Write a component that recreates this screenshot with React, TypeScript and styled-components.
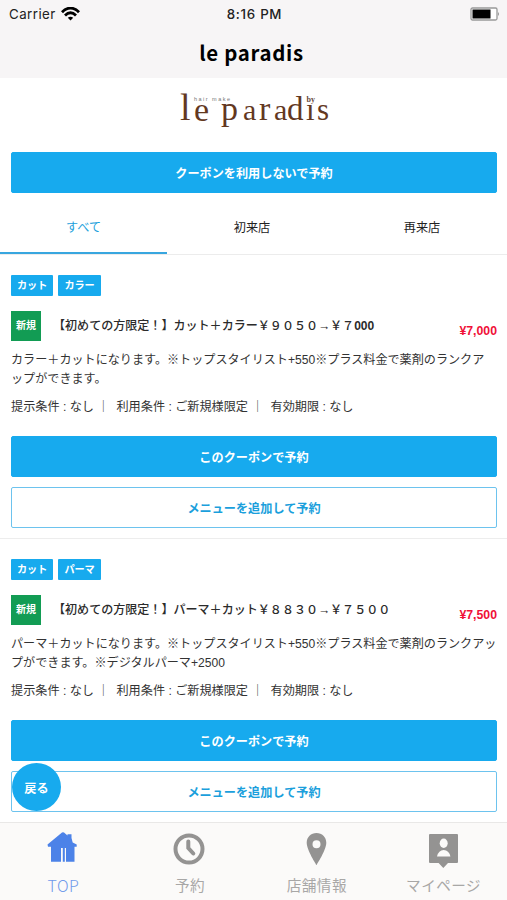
import React from 'react';
import styled, { createGlobalStyle } from 'styled-components';

const BLUE = '#17aaee';

const GlobalStyle = createGlobalStyle`
  * { box-sizing: border-box; }
  body {
    margin: 0;
    background: #fff;
    color: #333;
    font-family: "Liberation Sans", "Noto Sans CJK JP", sans-serif;
    font-size: 12.15px;
  }
  button { font: inherit; margin: 0; padding: 0; cursor: pointer; }
`;

const Screen = styled.div`
  position: relative;
  display: flex;
  flex-direction: column;
  height: 900px;
  overflow: hidden;
`;

const Header = styled.header`
  flex: none;
  height: 78px;
  background: #f7f5f6;
`;

const StatusBar = styled.div`
  display: grid;
  grid-template-columns: 1fr auto 1fr;
  align-items: center;
  height: 27px;
  padding: 0 7px 0 9px;
  color: #222;
  font-family: Inter, sans-serif;
  font-size: 13.3px;
`;

const Carrier = styled.div`
  display: flex;
  align-items: center;
  gap: 5px;
  letter-spacing: 0.45px;
`;

const Clock = styled.div`
  font-weight: 500;
  letter-spacing: 0.7px;
`;

const BatterySlot = styled.div`
  display: flex;
  justify-content: flex-end;
`;

const Title = styled.h1`
  margin: 0;
  height: 51px;
  padding-right: 4px;
  line-height: 50px;
  text-align: center;
  color: #000;
  font-family: "Noto Sans CJK JP", sans-serif;
  font-size: 20.4px;
  font-weight: 700;
  letter-spacing: 0.7px;
`;

const Brand = styled.div`
  flex: none;
  display: flex;
  justify-content: center;
  height: 74px;
`;

const Content = styled.main`
  flex: 1;
  min-height: 0;
  overflow: hidden;
`;

const Button = styled.button<{ $outline?: boolean }>`
  display: block;
  width: 100%;
  height: 41px;
  border: 1px solid ${(p) => (p.$outline ? '#6dc3ee' : BLUE)};
  border-radius: 2px;
  background: ${(p) => (p.$outline ? '#fff' : BLUE)};
  color: ${(p) => (p.$outline ? '#1b9fdc' : '#fff')};
  font-family: "Noto Sans CJK JP", sans-serif;
  font-weight: 700;
  line-height: 38px;
`;

const TopAction = styled.div`
  padding: 0 10px 0 11px;
`;

const Tabs = styled.div`
  display: grid;
  grid-template-columns: 167px 1fr 1fr;
  height: 62px;
  border-bottom: 1px solid #ececec;
`;

const Tab = styled.div<{ $active?: boolean }>`
  height: 61px;
  padding-top: 5px;
  line-height: 60px;
  text-align: center;
  color: ${(p) => (p.$active ? '#1b9fdc' : '#222')};
  box-shadow: ${(p) => (p.$active ? 'inset 0 -2px #38a6df' : 'none')};
`;

const Card = styled.article`
  height: 284px;
  padding: 20px 10px 0 11px;
  border-bottom: 1px solid #ededed;
`;

const Tags = styled.div`
  display: flex;
  gap: 5px;
`;

const Tag = styled.span`
  height: 21px;
  padding: 0 6px;
  border-radius: 1px;
  background: ${BLUE};
  color: #fff;
  font-size: 10.15px;
  font-weight: 700;
  line-height: 21px;
`;

const Heading = styled.div`
  display: flex;
  align-items: center;
  height: 30px;
  margin-top: 15px;
`;

const NewBadge = styled.span`
  flex: none;
  width: 30px;
  height: 30px;
  background: #129c54;
  color: #fff;
  font-size: 10px;
  font-weight: 700;
  line-height: 30px;
  text-align: center;
`;

const Name = styled.h2`
  flex: 1;
  margin: 0 0 0 12px;
  color: #2b2b2b;
  font-size: 12.05px;
  font-weight: 500;
  line-height: 30px;
  white-space: nowrap;
`;

const Price = styled.span`
  padding-top: 10px;
  color: #f01038;
  font-size: 12.3px;
  font-weight: 700;
`;

const Description = styled.p`
  margin: 10px 0 0;
  height: 37px;
  font-size: 12.1px;
  line-height: 18.5px;
  white-space: pre;
`;

const Conditions = styled.p`
  display: flex;
  margin: 10px 0 19px;
  height: 19px;
  line-height: 18px;
  white-space: pre;
`;

const Condition = styled.span`
  & + &::before {
    content: " ｜";
    margin-right: 7px;
  }
`;

const Actions = styled.div`
  display: grid;
  gap: 10px;
`;

const BackButton = styled.button`
  position: absolute;
  left: 12px;
  top: 763px;
  width: 49px;
  height: 48px;
  border: 0;
  border-radius: 50%;
  background: ${BLUE};
  color: #fff;
  font-weight: 700;
`;

const NavBar = styled.nav`
  flex: none;
  display: grid;
  grid-template-columns: repeat(4, 1fr);
  height: 78px;
  border-top: 1px solid #e9e8e7;
  background: #fbfaf9;
`;

const NavItem = styled.div<{ $active?: boolean }>`
  display: flex;
  flex-direction: column;
  align-items: center;
  padding-top: 7px;
  color: ${(p) => (p.$active ? '#4c82e8' : '#949392')};
`;

const NavLabel = styled.span<{ $latin?: boolean }>`
  margin-top: 3px;
  font-family: "Noto Sans CJK JP", sans-serif;
  font-size: ${(p) => (p.$latin ? '16px' : '14.6px')};
  font-weight: ${(p) => (p.$latin ? 300 : 400)};
  line-height: 24px;
  letter-spacing: 0.5px;
  white-space: nowrap;
  opacity: 0.8;
`;

const WifiIcon = () => (
  <svg width="19" height="14" viewBox="0 0 19 14" fill="none" stroke="#000" strokeWidth="2.8">
    <path d="M1 5.2C6-.3 13-.3 18 5.2" />
    <path d="M4 8.4C7.5 4.9 11.5 4.9 15 8.4" />
    <path d="M9.5 13.6 6.8 10.8C8.4 9.4 10.6 9.4 12.2 10.8Z" fill="#000" stroke="none" />
  </svg>
);

const BatteryIcon = () => (
  <svg width="30" height="14" viewBox="0 0 30 14">
    <rect x="1" y="1" width="26" height="12" rx="1.5" fill="#fff" stroke="#999" strokeWidth="1.3" />
    <rect x="2.5" y="2.5" width="18" height="9" fill="#000" />
    <path d="M28 5v4q2-2 0-4" fill="#999" />
  </svg>
);

const logoLetters: [string, number, number, number][] = [
  ['l', 3, 32, 38],
  ['e', 17, 33, 34],
  ['p', 44, 32, 34],
  ['a', 66, 32, 30],
  ['r', 82, 32, 34],
  ['a', 97, 32, 30],
  ['d', 110, 32, 33],
  ['ı', 129, 32, 31],
  ['s', 140, 32, 31],
];

const Logo = () => (
  <svg width="154" height="60" viewBox="0 -10 154 60">
    <g fill="#63381f" fontFamily="Liberation Serif, serif">
      {logoLetters.map(([letter, x, y, size], i) => (
        <text key={i} x={x} y={y} fontSize={size}>{letter}</text>
      ))}
    </g>
    <text x="17" y="12.5" fill="#777" fontFamily="Liberation Sans, sans-serif" fontSize="5.5" textLength="36">hair make</text>
    <text x="129.5" y="14" fill="#63483a" fontFamily="Liberation Serif, serif" fontWeight="700" fontSize="8">by</text>
  </svg>
);

const HomeIcon = () => (
  <svg width="34" height="40" viewBox="0 0 34 40" fill="currentColor">
    <path d="M1.5 14.5 16 2.5q1-.6 2 0l3.5 3V4.2h4V8l1.2 4.5 4 2v2.2h-2.2v15H20V18h-1.2v13.7h-2V18H15v13.7H5v-15H2Z" />
  </svg>
);

const HistoryIcon = () => (
  <svg width="34" height="40" viewBox="0 0 34 40" fill="none" stroke="currentColor">
    <circle cx="16" cy="19" r="13.5" strokeWidth="4" />
    <path d="M15.3 11.5V18l5 5.5" strokeWidth="4" strokeLinecap="round" />
  </svg>
);

const PinIcon = () => (
  <svg width="34" height="40" viewBox="0 0 34 40" fill="currentColor">
    <path fillRule="evenodd" d="M16.5 3C11 3 6.7 7.2 6.7 12.7 6.7 20 16.5 35 16.5 35S26.3 20 26.3 12.7C26.3 7.2 22 3 16.5 3Zm0 7.2a4 4 0 1 1 0 8 4 4 0 0 1 0-8Z" />
  </svg>
);

const PersonIcon = () => (
  <svg width="34" height="40" viewBox="0 0 34 40">
    <path fill="currentColor" d="M3 4h27q1 0 1 1v27q0 1-1 1h-9l-4.7 5-4.7-5H3q-1 0-1-1V5q0-1 1-1Z" />
    <ellipse cx="16.7" cy="13.3" rx="4" ry="4.7" fill="#fbfaf9" />
    <path fill="#fbfaf9" d="M10 26.5q1.5-6.5 6.7-6.5t6.7 6.5Z" />
  </svg>
);

const coupons = [
  {
    tags: ['カット', 'カラー'],
    name: <>【初めての方限定！】カット＋カラー￥９０５０→￥７<b>000</b></>,
    price: '¥7,000',
    description: 'カラー＋カットになります。※トップスタイリスト+550※プラス料金で薬剤のランクア\nップができます。',
  },
  {
    tags: ['カット', 'パーマ'],
    name: <>【初めての方限定！】パーマ＋カット￥８８３０→￥７５００</>,
    price: '¥7,500',
    description: 'パーマ＋カットになります。※トップスタイリスト+550※プラス料金で薬剤のランクアッ\nプができます。※デジタルパーマ+2500',
  },
];

const conditions = ['提示条件 : なし', '利用条件 : ご新規様限定', '有効期限 : なし'];

const navItems = [
  { label: 'TOP', Icon: HomeIcon },
  { label: '予約', Icon: HistoryIcon },
  { label: '店舗情報', Icon: PinIcon },
  { label: 'マイページ', Icon: PersonIcon },
];

export default function App() {
  return (
    <Screen>
      <GlobalStyle />
      <Header>
        <StatusBar>
          <Carrier>Carrier<WifiIcon /></Carrier>
          <Clock>8:16 PM</Clock>
          <BatterySlot><BatteryIcon /></BatterySlot>
        </StatusBar>
        <Title>le paradis</Title>
      </Header>
      <Brand><Logo /></Brand>
      <Content>
        <TopAction><Button>クーポンを利用しないで予約</Button></TopAction>
        <Tabs>
          <Tab $active>すべて</Tab>
          <Tab>初来店</Tab>
          <Tab>再来店</Tab>
        </Tabs>
        {coupons.map((coupon) => (
          <Card key={coupon.price}>
            <Tags>{coupon.tags.map((tag) => <Tag key={tag}>{tag}</Tag>)}</Tags>
            <Heading>
              <NewBadge>新規</NewBadge>
              <Name>{coupon.name}</Name>
              <Price>{coupon.price}</Price>
            </Heading>
            <Description>{coupon.description}</Description>
            <Conditions>
              {conditions.map((text) => <Condition key={text}>{text}</Condition>)}
            </Conditions>
            <Actions>
              <Button>このクーポンで予約</Button>
              <Button $outline>メニューを追加して予約</Button>
            </Actions>
          </Card>
        ))}
      </Content>
      <BackButton>戻る</BackButton>
      <NavBar>
        {navItems.map(({ label, Icon }, i) => (
          <NavItem key={label} $active={i === 0}>
            <Icon />
            <NavLabel $latin={i === 0}>{label}</NavLabel>
          </NavItem>
        ))}
      </NavBar>
    </Screen>
  );
}
